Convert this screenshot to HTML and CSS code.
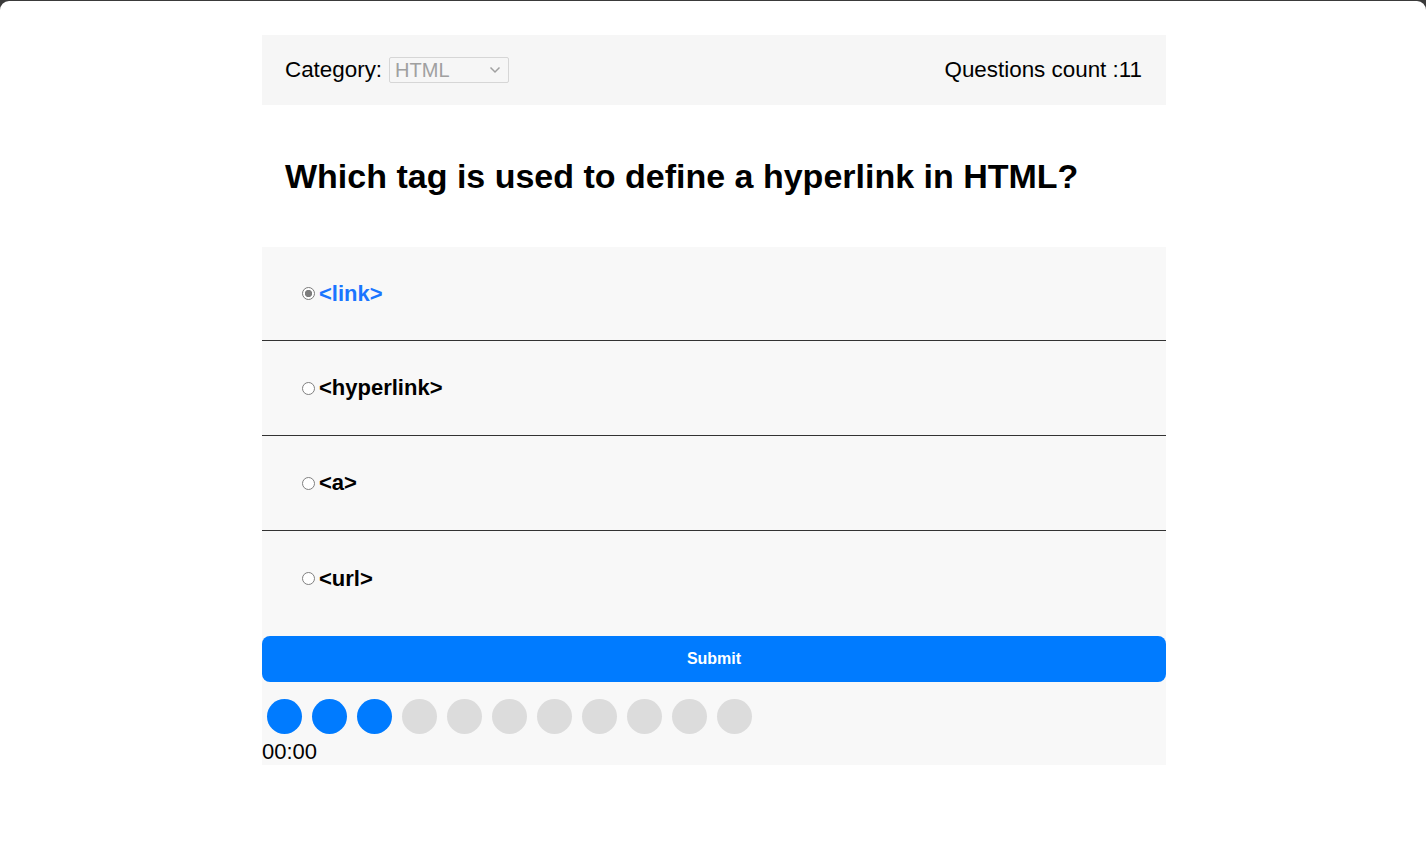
FILE: index.html
```html
<!DOCTYPE html>
<html lang="en">
<head>
<meta charset="utf-8">
<title>Quiz</title>
<link rel="stylesheet" href="styles.css">
</head>
<body>
<div class="app">
  <header class="topbar">
    <label class="category">Category:
      <select class="cat-select">
        <option>HTML</option>
      </select>
    </label>
    <div class="count">Questions count :11</div>
  </header>
  <div class="question">
    <h2 class="question-text">Which tag is used to define a hyperlink in HTML?</h2>
  </div>
  <div class="quiz-body">
    <ul class="options">
      <li class="option selected"><label><input type="radio" name="ans" checked><span>&lt;link&gt;</span></label></li>
      <li class="option"><label><input type="radio" name="ans"><span>&lt;hyperlink&gt;</span></label></li>
      <li class="option"><label><input type="radio" name="ans"><span>&lt;a&gt;</span></label></li>
      <li class="option"><label><input type="radio" name="ans"><span>&lt;url&gt;</span></label></li>
    </ul>
    <button class="submit">Submit</button>
    <div class="dots">
      <span class="dot done"></span><span class="dot done"></span><span class="dot done"></span><span class="dot"></span><span class="dot"></span><span class="dot"></span><span class="dot"></span><span class="dot"></span><span class="dot"></span><span class="dot"></span><span class="dot"></span>
    </div>
    <div class="timer">00:00</div>
  </div>
</div>
</body>
</html>
```

FILE: styles.css
```css
html {
  background: #3a3a3a;
}
body {
  margin: 1px 0 0 0;
  padding-left: 2px;
  min-height: 841px;
  background: #ffffff;
  border-radius: 9px 9px 0 0;
  font-family: "Liberation Sans", Arial, sans-serif;
  color: #000;
  overflow: hidden;
}
.app {
  width: 904px;
  margin: 34px auto 0;
}
.topbar {
  height: 70px;
  background: #f6f6f6;
  display: flex;
  align-items: center;
  justify-content: space-between;
  padding: 0 24px 0 23px;
  box-sizing: border-box;
  font-size: 22.4px;
}
.category {
  display: flex;
  align-items: center;
}
.cat-select {
  -webkit-appearance: none;
  appearance: none;
  margin-left: 7px;
  width: 120px;
  height: 26px;
  padding: 0 0 0 5px;
  font-family: "Liberation Sans", Arial, sans-serif;
  font-size: 20px;
  color: #a0a0a0;
  background-color: #f6f6f6;
  background-image: url("data:image/svg+xml,%3Csvg xmlns='http://www.w3.org/2000/svg' width='12' height='8' viewBox='0 0 12 8'%3E%3Cpath d='M1.5 1.5 L6 6 L10.5 1.5' fill='none' stroke='%23a0a0a0' stroke-width='1.5'/%3E%3C/svg%3E");
  background-repeat: no-repeat;
  background-position: right 7px center;
  border: 1px solid #d6d6d6;
  border-radius: 2px;
}
.question {
  height: 142px;
  display: flex;
  align-items: center;
  padding-left: 23px;
}
.question-text {
  margin: 0;
  font-size: 34px;
  font-weight: bold;
}
.quiz-body {
  background: #f8f8f8;
}
.options {
  list-style: none;
  margin: 0;
  padding: 0;
}
.option {
  height: 95px;
  box-sizing: border-box;
  border-bottom: 1px solid #333;
  display: flex;
  align-items: center;
  padding-left: 35px;
}
.option:first-child {
  height: 94px;
}
.option:last-child {
  border-bottom: none;
}
.option label {
  display: flex;
  align-items: center;
  font-size: 22px;
  font-weight: bold;
}
.option input {
  -webkit-appearance: none;
  appearance: none;
  box-sizing: border-box;
  margin: 0 4px 0 5px;
  width: 13px;
  height: 13px;
  border: 1px solid #808080;
  border-radius: 50%;
  background: #fff;
}
.option input:checked {
  border-color: #7a7a7a;
  background: radial-gradient(circle, #7d7d7d 0 3.4px, #ffffff 3.9px);
}
.option.selected label {
  color: #1a75ff;
}
.submit {
  display: block;
  width: 100%;
  height: 46px;
  margin-top: 10px;
  border: none;
  border-radius: 8px;
  background: #007bff;
  color: #fff;
  font-family: "Liberation Sans", Arial, sans-serif;
  font-size: 16px;
  font-weight: bold;
}
.dots {
  display: flex;
  margin-top: 12px;
}
.dot {
  width: 35px;
  height: 35px;
  margin: 5px;
  border-radius: 50%;
  background: #dcdcdc;
}
.dot.done {
  background: #007bff;
}
.timer {
  font-size: 22px;
  height: 26px;
  line-height: 25px;
}
```
